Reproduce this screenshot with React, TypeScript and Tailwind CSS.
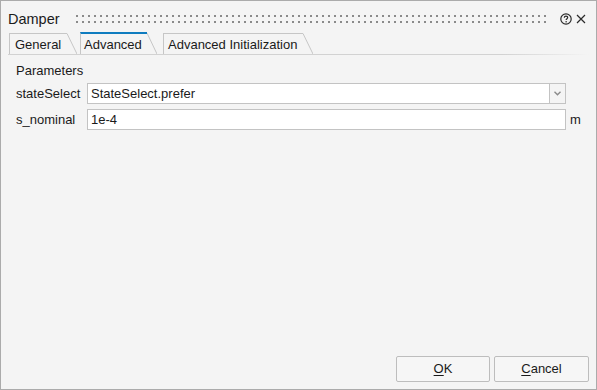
import React from "react";

function Tab({
  label,
  width,
  pad,
  selected,
  className = "",
}: {
  label: string;
  width: string;
  pad: string;
  selected?: boolean;
  className?: string;
}) {
  return (
    <div className={`flex items-stretch ${selected ? "h-[22px]" : "h-[21px]"} ${className}`}>
      <div
        className={`${width} ${pad} border-l border-t border-[#c6c6c6] ${
          selected ? "border-t-2 border-t-[#0f7cbf]" : ""
        } pt-[3px] leading-[16px] text-[13px] text-[#1a1a1a] whitespace-nowrap`}
      >
        {label}
      </div>
      <svg width="10" height={selected ? 22 : 21} className="shrink-0">
        <line
          x1="0"
          y1={selected ? 1 : 0.5}
          x2="10"
          y2={selected ? 22 : 21}
          stroke="#c6c6c6"
          strokeWidth="1"
        />
      </svg>
    </div>
  );
}

export default function App() {
  return (
    <div className="w-[597px] h-[390px] border border-[#ababab] bg-[#f4f4f4] flex flex-col font-['Liberation_Sans',Arial,sans-serif] text-[#1a1a1a] overflow-hidden">
      {/* Title bar */}
      <div className="flex items-center h-[18px] mt-[9px] pl-[7px] pr-[10px]">
        <span className="w-[68px] text-[14.5px] leading-[18px] text-[#1b1b1b]">Damper</span>
        <div className="flex-1 h-[8px]">
          <svg width="100%" height="8" shapeRendering="crispEdges">
            <defs>
              <pattern id="grip" width="6" height="8" patternUnits="userSpaceOnUse">
                <rect x="0" y="0" width="2" height="2" fill="#8a8a8a" />
                <rect x="0" y="6" width="2" height="2" fill="#8a8a8a" />
              </pattern>
            </defs>
            <rect width="100%" height="8" fill="url(#grip)" />
          </svg>
        </div>
        <svg width="12" height="12" viewBox="0 0 12 12" className="ml-[10px]">
          <circle cx="6" cy="6" r="5.2" fill="none" stroke="#2a2a2a" strokeWidth="1.2" />
          <path
            d="M4.3 4.8 C4.3 3.6 5.1 3.1 6 3.1 C6.9 3.1 7.7 3.6 7.7 4.6 C7.7 5.6 6.1 5.8 6.1 7.1"
            fill="none"
            stroke="#2a2a2a"
            strokeWidth="1.2"
          />
          <rect x="5.5" y="8.1" width="1.3" height="1.3" fill="#2a2a2a" />
        </svg>
        <svg width="10" height="10" viewBox="0 0 10 10" className="ml-[4px]">
          <path d="M1 1 L9 9 M9 1 L1 9" stroke="#2a2a2a" strokeWidth="1.2" />
        </svg>
      </div>

      {/* Tabs */}
      <div className="flex items-end h-[22px] mt-[4px] ml-[8px]">
        <Tab label="General" width="w-[58px]" pad="pl-[5px]" />
        <Tab label="Advanced" width="w-[67px]" pad="pl-[3px]" selected className="ml-[3px]" />
        <Tab label="Advanced Initialization" width="w-[140px]" pad="pl-[4px]" className="ml-[6px]" />
      </div>
      <div className="h-px mx-[7px] bg-linear-to-r from-[#d2d2d2] from-85% to-transparent" />

      {/* Parameters */}
      <div className="pl-[15px] mt-[8px]">
        <div className="text-[13px] leading-[16px]">Parameters</div>
        <div className="grid grid-cols-[67px_1fr_26px] gap-x-[4px] gap-y-[5px] mt-[4px] items-center text-[13px]">
          <span className="leading-[16px] whitespace-nowrap">stateSelect</span>
          <div className="flex h-[21px]">
            <div className="flex-1 bg-white border border-[#c3c3c3] pl-[3px] leading-[19px]">
              StateSelect.prefer
            </div>
            <div className="w-[16px] border border-l-0 border-[#c3c3c3] flex items-center justify-center">
              <svg width="7" height="5" viewBox="0 0 7 5">
                <path d="M0.5 0.8 L3.5 3.8 L6.5 0.8" fill="none" stroke="#8a8a8a" strokeWidth="1.4" />
              </svg>
            </div>
          </div>
          <span />
          <span className="leading-[16px] whitespace-nowrap">s_nominal</span>
          <div className="h-[21px] bg-white border border-[#c3c3c3] pl-[3px] leading-[19px]">1e-4</div>
          <span className="leading-[16px]">m</span>
        </div>
      </div>

      {/* Buttons */}
      <div className="mt-auto flex justify-end gap-[4px] pr-[7px] pb-[7px]">
        <button className="w-[94px] h-[26px] border border-[#bdbdbd] rounded-[2px] bg-[#f6f6f6] text-[13px] text-[#1a1a1a]">
          <span className="underline underline-offset-2">O</span>K
        </button>
        <button className="w-[95px] h-[26px] border border-[#bdbdbd] rounded-[2px] bg-[#f6f6f6] text-[13px] text-[#1a1a1a]">
          <span className="underline underline-offset-2">C</span>ancel
        </button>
      </div>
    </div>
  );
}
